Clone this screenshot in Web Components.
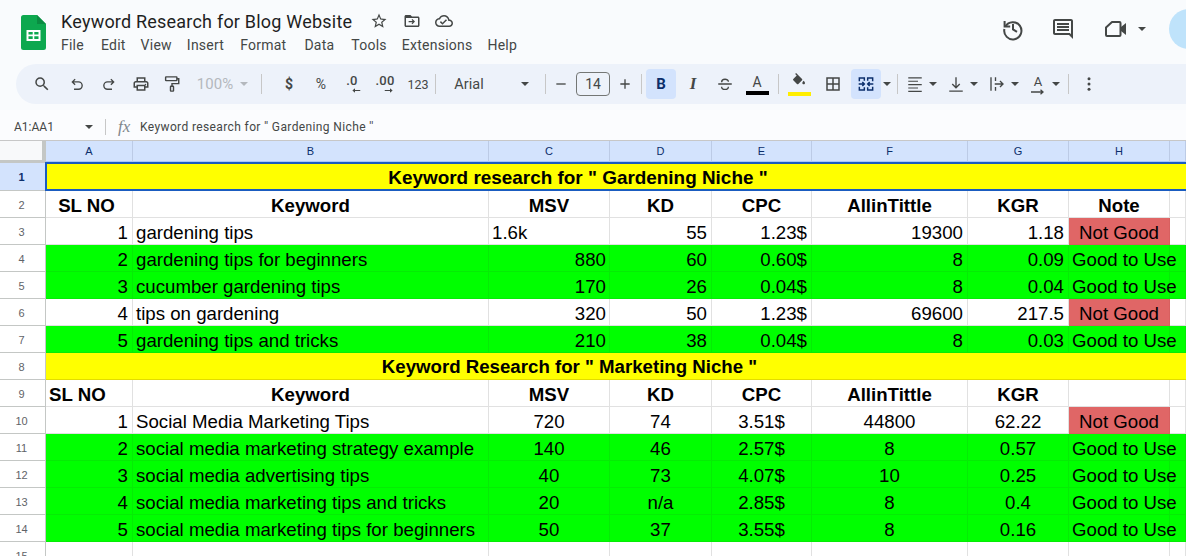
<!DOCTYPE html>
<html>
<head>
<meta charset="utf-8">
<title>Keyword Research for Blog Website</title>
<style>
  html, body { margin: 0; height: 100%; overflow: hidden; background: #f9fbfd; }
  gs-app { width: 1186px; height: 556px; }
</style>
</head>
<body>
<gs-app></gs-app>
<script>
const ICONS = {
  star: '<path d="M22 9.24l-7.19-.62L12 2 9.19 8.63 2 9.24l5.46 4.73L5.82 21 12 17.27 18.18 21l-1.63-7.03L22 9.24zM12 15.4l-3.76 2.27 1-4.28-3.32-2.88 4.38-.38L12 6.1l1.71 4.04 4.38.38-3.32 2.88 1 4.28L12 15.4z"/>',
  folder: '<path d="M20 6h-8l-2-2H4c-1.1 0-2 .9-2 2v12c0 1.1.9 2 2 2h16c1.1 0 2-.9 2-2V8c0-1.1-.9-2-2-2zm0 12H4V8h16v10z"/><path d="M12.5 9.2l-1.1 1.1 1.5 1.6H7.5v1.6h5.4l-1.5 1.6 1.1 1.1 3.5-3.5z"/>',
  cloud: '<path d="M19.35 10.04C18.67 6.59 15.64 4 12 4 9.11 4 6.6 5.64 5.35 8.04 2.34 8.36 0 10.91 0 14c0 3.31 2.69 6 6 6h13c2.76 0 5-2.24 5-5 0-2.64-2.05-4.78-4.65-4.96zM19 18H6c-2.21 0-4-1.79-4-4 0-2.05 1.53-3.76 3.56-3.97l1.07-.11.5-.95C8.08 7.14 9.94 6 12 6c2.62 0 4.88 1.86 5.39 4.43l.3 1.5 1.53.11c1.56.1 2.78 1.41 2.78 2.96 0 1.65-1.35 3-3 3zm-9-3.82l-2.09-2.09L6.5 13.5 10 17l6.01-6.01-1.41-1.41z"/>',
  history: '<g fill="none" stroke="currentColor" stroke-width="2"><path d="M3.6 4v5.6h5.6"/><path d="M4.4 9.4A8.6 8.6 0 1 1 3.4 12"/><path d="M12 7v5.4l4 2.4"/></g>',
  comment: '<path d="M21.99 4c0-1.1-.89-2-1.99-2H4c-1.1 0-2 .9-2 2v12c0 1.1.9 2 2 2h14l4 4-.01-18zM20 4v13.17L18.83 16H4V4h16zM6 12h12v2H6zm0-3h12v2H6zm0-3h12v2H6z"/>',
  video: '<path fill="none" stroke="currentColor" stroke-width="2" stroke-linejoin="round" d="M8 5h7.5a1 1 0 0 1 1 1v12a1 1 0 0 1-1 1H3a1 1 0 0 1-1-1v-7.5z"/><path d="M17 10l5-4v12l-5-4z"/>',
  search: '<path d="M15.5 14h-.79l-.28-.27A6.471 6.471 0 0 0 16 9.5 6.5 6.5 0 1 0 9.5 16c1.61 0 3.09-.59 4.23-1.57l.27.28v.79l5 4.99L20.49 19l-4.99-5zm-6 0C7.01 14 5 11.99 5 9.5S7.01 5 9.5 5 14 7.01 14 9.5 11.99 14 9.5 14z"/>',
  undo: '<path fill="none" stroke="currentColor" stroke-width="1.8" d="M9.5 5.5 5.800 9.200l3.700 3.700M6 9.200h8a4.900 4.900 0 0 1 0 9.800H8"/>',
  redo: '<path fill="none" stroke="currentColor" stroke-width="1.8" d="M14.500 5.500l3.700 3.700-3.700 3.700M18 9.200h-8a4.900 4.900 0 0 0 0 9.800h6"/>',
  print: '<path d="M19 8h-1V3H6v5H5c-1.66 0-3 1.34-3 3v6h4v4h12v-4h4v-6c0-1.66-1.34-3-3-3zM8 5h8v3H8V5zm8 12v2H8v-4h8v2zm2-2v-2H6v2H4v-4c0-.55.45-1 1-1h14c.55 0 1 .45 1 1v4h-2z"/><circle cx="18" cy="12.5" r="1"/>',
  paint: '<g fill="none" stroke="currentColor" stroke-width="1.9"><rect x="3.5" y="2.5" width="15" height="5" rx=".6"/><path d="M18.5 5h2.5v6.5h-9V15"/><rect x="10" y="15" width="4" height="6.5" rx=".6"/></g>',
  minus: '<path d="M5 11h14v2H5z"/>',
  plus: '<path d="M11 5h2v6h6v2h-6v6h-2v-6H5v-2h6z"/>',
  strike: '<path fill="none" stroke="currentColor" stroke-width="1.8" d="M3 12h18M7.5 9.5C7.5 4.5 16.5 4.5 16.5 9M7.5 15.5c0 5 9 5 9 0"/>',
  fill: '<path d="M16.56 8.94L7.62 0 6.21 1.41l2.38 2.38-5.15 5.15c-.59.59-.59 1.54 0 2.12l5.5 5.5c.29.29.68.44 1.06.44s.77-.15 1.06-.44l5.5-5.5c.59-.58.59-1.53 0-2.12zM19 11.5s-2 2.17-2 3.5c0 1.1.9 2 2 2s2-.9 2-2c0-1.33-2-3.5-2-3.5z"/>',
  borders: '<path d="M3 3v18h18V3H3zm8 16H5v-6h6v6zm0-8H5V5h6v6zm8 8h-6v-6h6v6zm0-8h-6V5h6v6z"/>',
  merge: '<path fill="none" stroke="currentColor" stroke-width="2.2" d="M2 8V3h7.500v4M22 8V3h-7.500v4M2 16v5h7.500v-4M22 16v5h-7.500v-4M1 12h8M6.500 9 9.500 12l-3 3M23 12h-8M17.500 9 14.500 12l3 3"/>',
  align: '<path d="M3 3h18v1.600H3zM3 7.500h13v1.600H3zM3 12h18v1.600H3zM3 16.500h13v1.600H3zM3 21h18v1.600H3z"/>',
  valign: '<path fill="none" stroke="currentColor" stroke-width="1.800" d="M12 3v14M7 12l5 5 5-5M3 21.500h18"/>',
  wrap: '<path fill="none" stroke="currentColor" stroke-width="1.800" d="M4 3v18M10 3v5M10 16v5M9 12h11M16 8l4 4-4 4"/>',
  more: '<circle cx="12" cy="5" r="2"/><circle cx="12" cy="12" r="2"/><circle cx="12" cy="19" r="2"/>',
  arrowl: '<path d="M22 10.500H8V6L1 12l7 6v-4.500h14z"/>',
  arrowr: '<path d="M2 10.500h14V6l7 6-7 6v-4.500H2z"/>'
};

class GsIcon extends HTMLElement {
  connectedCallback() {
    if (this.shadowRoot) return;
    const size = this.getAttribute("size") || 18;
    this.attachShadow({ mode: "open" });
    this.shadowRoot.innerHTML = `
      <style>
        :host { display: inline-flex; width: ${size}px; height: ${size}px; color: var(--icon, #444746); flex: none; }
        svg { width: 100%; height: 100%; fill: currentColor; display: block; }
      </style>
      <svg viewBox="0 0 24 24">${ICONS[this.getAttribute("name")] || ""}</svg>`;
  }
}

class GsCaret extends HTMLElement {
  constructor() {
    super();
    this.attachShadow({ mode: "open" });
    this.shadowRoot.innerHTML = `
      <style>
        :host { display: inline-block; width: 0; height: 0; flex: none; margin-right: 1px;
          border-left: 4px solid transparent; border-right: 4px solid transparent;
          border-top: 4px solid var(--icon, #444746); }
      </style>`;
  }
}

class GsTitleBar extends HTMLElement {
  constructor() {
    super();
    this.attachShadow({ mode: "open" });
    const menus = ["File", "Edit", "View", "Insert", "Format", "Data", "Tools", "Extensions", "Help"];
    this.shadowRoot.innerHTML = `
      <style>
        :host { display: flex; height: 64px; flex: none; box-sizing: border-box; padding-left: 21px; overflow: hidden;
          font-family: Roboto, "Liberation Sans", sans-serif; color: #1f1f1f; }
        .logo { width: 25px; height: 35px; margin-top: 15px; flex: none; }
        .doc { margin-left: 15px; padding-top: 10px; width: 480px; flex: none; }
        .name { display: flex; align-items: center; height: 22px; margin-bottom: 2px; font-size: 18px; letter-spacing: .21px; white-space: nowrap; }
        .name span { width: 291px; flex: none; }
        .name gs-icon { margin-right: 14.500px; --icon: #444746; }
        .name gs-icon:first-of-type { margin-left: 18px; }
        .menu { display: flex; gap: 0; margin-top: 1px; font-size: 14px; letter-spacing: .24px; color: #444746; white-space: nowrap; height: 22px; align-items: center; }
        .actions { margin-left: auto; display: flex; align-items: center; height: 58px; }
        .actions gs-icon { --icon: #444746; }
        .avatar { width: 40px; height: 40px; border-radius: 50%; background: #bfe3fb; margin-left: 22px; margin-right: -23px; flex: none; }
      </style>
      <svg class="logo" viewBox="0 0 25 35">
        <path fill="#0da84f" d="M2.500 0H16l9 9v23.500a2.500 2.500 0 0 1-2.500 2.500h-20A2.500 2.500 0 0 1 0 32.500v-30A2.500 2.500 0 0 1 2.500 0z"/>
        <path fill="#0a8c42" d="M16 0l9 9h-9z"/>
        <path fill="#fff" d="M5.500 15h14v11h-14z"/>
        <path fill="#0da84f" d="M7.500 17h4.200v2.500H7.500zM13.300 17h4.200v2.500h-4.200zM7.500 21.300h4.200v2.700H7.500zM13.300 21.300h4.200v2.700h-4.200z"/>
      </svg>
      <div class="doc">
        <div class="name"><span>Keyword Research for Blog Website</span>
          <gs-icon name="star" size="18"></gs-icon><gs-icon name="folder" size="18"></gs-icon><gs-icon name="cloud" size="18"></gs-icon>
        </div>
        <div class="menu">${menus.map((m, i) => `<span style="margin-right:${[17,15,15,16,18,17,15,15,0][i]}px">${m}</span>`).join("")}</div>
      </div>
      <div class="actions">
        <gs-icon name="history" size="24"></gs-icon>
        <gs-icon name="comment" size="24" style="margin-left:26px"></gs-icon>
        <gs-icon name="video" size="24" style="margin-left:29px"></gs-icon>
        <gs-caret style="margin-left:10px"></gs-caret>
        <div class="avatar"></div>
      </div>`;
  }
}

// [kind, centre x, width, payload]
const TOOLS = [
  ["icon", 42, 18, "search"], ["icon", 77, 18, "undo"], ["icon", 109, 18, "redo"], ["icon", 141, 18, "print"],
  ["icon", 172, 18, "paint"], ["text dim", 215, 40, "100%"], ["caret dim", 244, 10], ["sep", 261, 1],
  ["text b", 289, 14, "$"], ["text", 321, 14, "%"], ["dec", 352, 22, ".0|arrowl"], ["dec", 385, 24, ".00|arrowr"],
  ["text small", 418, 26, "123"], ["sep", 435, 1], ["text font", 469, 32, "Arial"], ["caret", 525, 10], ["sep", 545, 1],
  ["icon", 561, 16, "minus"], ["size", 593, 34, "14"], ["icon", 625, 16, "plus"], ["sep", 641, 1],
  ["on b", 661, 30, "B"], ["text i", 693, 20, "I"], ["icon", 725, 18, "strike"], ["color", 757, 24, "A"], ["sep", 778, 1],
  ["fill", 799, 24], ["icon", 833, 18, "borders"], ["on", 866, 30, "merge"], ["caret", 887, 10], ["sep", 897, 1],
  ["icon", 915, 18, "align"], ["caret", 933, 10], ["icon", 956, 18, "valign"], ["caret", 974, 10],
  ["icon", 997, 18, "wrap"], ["caret", 1015, 10], ["rotate", 1038, 20, "A"], ["caret", 1056, 10], ["sep", 1068, 1],
  ["icon", 1089, 18, "more"]
];

class GsToolbar extends HTMLElement {
  constructor() {
    super();
    this.attachShadow({ mode: "open" });
    let right = 16;
    const html = TOOLS.map(([kind, x, w, p]) => {
      const left = x - w / 2;
      const margin = left - right;
      const style = `margin-left:${margin}px;width:${w}px`;
      right = left + w;
      const k = kind.split(" ")[0];
      if (k === "icon") return `<gs-icon name="${p}" style="${style}"></gs-icon>`;
      if (k === "caret") return `<gs-caret class="${kind}" style="margin-left:${margin + 1}px"></gs-caret>`;
      if (k === "sep") return `<i class="sep" style="${style}"></i>`;
      if (k === "text") return `<span class="${kind}" style="${style}">${p}</span>`;
      if (k === "dec") {
        const [t, a] = p.split("|");
        return `<span class="dec" style="${style}"><b>${t}</b><gs-icon name="${a}" size="9" class="${a}"></gs-icon></span>`;
      }
      if (k === "size") return `<span class="size" style="${style}">${p}</span>`;
      if (k === "on") return `<span class="on" style="${style}">${p === "B" ? "B" : `<gs-icon name="merge" size="16"></gs-icon>`}</span>`;
      if (k === "color") return `<span class="color" style="${style}"><span>A</span><i></i></span>`;
      if (k === "fill") return `<span class="color fill" style="${style}"><gs-icon name="fill" size="16"></gs-icon><i></i></span>`;
      if (k === "rotate") return `<span class="rotate" style="${style}"><span>A</span><svg viewBox="0 0 14 6"><path d="M0 3h12M9.500 .8 12 3 9.500 5.200" fill="none" stroke="#444746" stroke-width="1.300"/></svg></span>`;
      return "";
    }).join("");
    this.shadowRoot.innerHTML = `
      <style>
        :host { display: flex; align-items: center; height: 40px; flex: none; width: 1200px; margin-left: 16px;
          box-sizing: border-box; background: #edf2fa; border-radius: 20px 0 0 20px;
          font-family: Roboto, "Liberation Sans", sans-serif; color: #444746; font-size: 14px; white-space: nowrap; margin-bottom: 6px; }
        .sep { height: 20px; background: #c7c7c7; display: block; flex: none; }
        span { display: inline-flex; align-items: center; justify-content: center; box-sizing: border-box; flex: none; }
        .dim { color: #b4b8bd; --icon: #b4b8bd; font-size: 15px; }
        .b { font-weight: 700; font-size: 14px; }
        .small { font-size: 12.500px; }
        .font { font-size: 14.500px; }
        .dec { flex-direction: column; height: 24px; }
        .dec b { font-size: 13px; line-height: 14px; font-weight: 500; letter-spacing: .2px; }
        .dec gs-icon { margin-top: -2px; }
        .arrowl { margin-left: 8px; }
        .arrowr { margin-left: 6px; }
        .size { height: 24px; border: 1px solid #747775; border-radius: 4px; color: #444746; }
        .on { height: 30px; background: #d3e3fd; border-radius: 4px; color: #0b2e6b; --icon: #0b2e6b; font-weight: 700; font-size: 15px; }
        .i { font-family: "Liberation Serif", serif; font-style: italic; font-weight: 700; font-size: 17px; }
        .color { flex-direction: column; height: 26px; font-size: 14px; }
        .color span { height: 18px; }
        .color i { display: block; width: 23px; height: 4px; background: #000; }
        .fill gs-icon { margin-bottom: 3px; }
        .fill i { background: #ffee00; }
        .rotate { flex-direction: column; height: 22px; font-size: 13px; }
        .rotate span { height: 15px; }
        .rotate svg { width: 14px; height: 6px; }
      </style>${html}`;
  }
}

class GsFormulaBar extends HTMLElement {
  constructor() {
    super();
    this.attachShadow({ mode: "open" });
    this.shadowRoot.innerHTML = `
      <style>
        :host { display: flex; align-items: center; height: 31px; flex: none; box-sizing: border-box;
          padding: 3px 0 0 14px; background: #fbfcfe; border-bottom: 1px solid #c7c7c7;
          font-family: Roboto, "Liberation Sans", sans-serif; font-size: 12px; color: #444746; white-space: nowrap; }
        .ref { width: 71px; flex: none; }
        .sep { width: 1px; height: 16px; background: #c7c7c7; margin-left: 11px; flex: none; }
        .fx { font-family: "Liberation Serif", serif; font-style: italic; font-size: 17px; color: #80868b; margin-left: 12px; width: 22px; flex: none; }
        .text { letter-spacing: .38px; }
      </style>
      <span class="ref">A1:AA1</span><gs-caret></gs-caret><span class="sep"></span>
      <span class="fx">fx</span><span class="text"><slot></slot></span>`;
  }
}

const RIGHT = "r", CENTER = "c", LEFT = "l";
const ROWS = [
  { title: `Keyword research for " Gardening Niche "`, sel: 1, pad: 80 },
  { head: ["SL NO", "Keyword", "MSV", "KD", "CPC", "AllinTittle", "KGR", "Note"], pad: 5 },
  { v: ["1", "gardening tips", "1.6k", "55", "1.23$", "19300", "1.18", "Not Good"], c: RIGHT },
  { v: ["2", "gardening tips for beginners", "880", "60", "0.60$", "8", "0.09", "Good to Use"], c: RIGHT, g: 1 },
  { v: ["3", "cucumber gardening tips", "170", "26", "0.04$", "8", "0.04", "Good to Use"], c: RIGHT, g: 1 },
  { v: ["4", "tips on gardening", "320", "50", "1.23$", "69600", "217.5", "Not Good"], c: RIGHT },
  { v: ["5", "gardening tips and tricks", "210", "38", "0.04$", "8", "0.03", "Good to Use"], c: RIGHT, g: 1 },
  { title: `Keyword Research for " Marketing Niche "`, pad: 96 },
  { head: ["SL NO", "Keyword", "MSV", "KD", "CPC", "AllinTittle", "KGR", ""], leftA: 1 },
  { v: ["1", "Social Media Marketing Tips", "720", "74", "3.51$", "44800", "62.22", "Not Good"], c: CENTER },
  { v: ["2", "social media marketing strategy example", "140", "46", "2.57$", "8", "0.57", "Good to Use"], c: CENTER, g: 1 },
  { v: ["3", "social media advertising tips", "40", "73", "4.07$", "10", "0.25", "Good to Use"], c: CENTER, g: 1 },
  { v: ["4", "social media marketing tips and tricks", "20", "n/a", "2.85$", "8", "0.4", "Good to Use"], c: CENTER, g: 1 },
  { v: ["5", "social media marketing tips for beginners", "50", "37", "3.55$", "8", "0.16", "Good to Use"], c: CENTER, g: 1 }
];

class GsSheet extends HTMLElement {
  constructor() {
    super();
    this.attachShadow({ mode: "open" });
    const cell = (text, cls, style = "") => `<div class="cell ${cls}" style="${style}">${text}</div>`;
    let html = `<div class="corner"></div>`;
    "ABCDEFGHI".split("").forEach(l => { html += `<div class="col">${l === "I" ? "" : l}</div>`; });
    ROWS.forEach((row, i) => {
      html += `<div class="rownum ${row.sel ? "sel" : ""}">${i + 1}</div>`;
      if (row.title) {
        html += `<div class="cell title ${row.sel ? "selected" : ""}" style="padding-right:${row.pad}px">${row.title}</div>`;
      } else if (row.head) {
        row.head.forEach((t, j) => {
          html += cell(t, `bold ${j === 0 && row.leftA ? "l" : "c"}`, j === 0 && row.pad ? `padding-right:${row.pad}px` : "");
        });
        html += cell("", "");
      } else {
        row.v.forEach((t, j) => {
          let cls = row.g ? "green " : "";
          if (j === 0) cls += "r";
          else if (j === 1) cls += "l";
          else if (j === 7) cls += t === "Not Good" ? "c red" : "l over";
          else if (t === "1.6k") cls += "l";
          else cls += row.c;
          html += cell(t, cls, j === 2 && row.c === RIGHT ? "padding-right:3px" : "");
        });
        html += cell("", row.g ? "green" : "");
      }
    });
    html += `<div class="rownum">15</div>` + `<div class="cell"></div>`.repeat(9);
    this.shadowRoot.innerHTML = `
      <style>
        :host { display: grid; flex: 1; min-height: 0; overflow: hidden; background: #fff;
          grid-template-columns: 46px 87px 356px 121px 102px 100px 156px 101px 101px 16px;
          grid-template-rows: 22px 28px repeat(14, 27px);
          font-family: "Liberation Sans", Arial, sans-serif; font-size: 18.670px; color: #000; }
        .corner { background: #f8f9fa; box-sizing: border-box; border-right: 4px solid #c4c7c5; border-bottom: 3px solid #c4c7c5; }
        .col { background: #d3e3fd; box-sizing: border-box; border-right: 1px solid #bccbe6; border-bottom: 2px solid #a8c7fa;
          display: flex; align-items: center; justify-content: center;
          font-size: 11px; color: #0b2e6b; }
        .rownum { box-sizing: border-box; background: #fff; border-right: 1px solid #c4c7c5; border-bottom: 1px solid #c4c7c5;
          display: flex; align-items: center; justify-content: center; padding-right: 2px; padding-top: 1px;
          font-size: 11px; color: #5f6368; }
        .rownum.sel { background: #d3e3fd; color: #0b2e6b; font-weight: 700; }
        .cell { box-sizing: border-box; border-right: 1px solid #e1e1e1; border-bottom: 1px solid #e1e1e1;
          padding: 4px 4px 0 3px; white-space: nowrap; display: flex; align-items: center; line-height: 22px; min-width: 0; }
        .r { justify-content: flex-end; }
        .c { justify-content: center; padding-left: 0; padding-right: 0; }
        .l { justify-content: flex-start; }
        .bold { font-weight: 700; }
        .title { grid-column: 2 / -1; background: #ffff00; font-weight: 700; justify-content: center; border-right: 0; border-bottom-color: #e2dc00; padding-top: 2px; }
        .selected { border: 2px solid #1a5cc0; border-right: 0; margin-left: -1px; margin-top: -1px; font-size: 18.920px; }
        .green { background: #00ff00; border-color: #05ec05; }
        .red { background: #e06666; border-color: #d86060; }
        .over { z-index: 1; }
      </style>${html}`;
  }
}

class GsApp extends HTMLElement {
  constructor() {
    super();
    this.attachShadow({ mode: "open" });
    this.shadowRoot.innerHTML = `
      <style>
        :host { display: flex; flex-direction: column; overflow: hidden; background: #f9fbfd; }
      </style>
      <gs-title-bar></gs-title-bar>
      <gs-toolbar></gs-toolbar>
      <gs-formula-bar>Keyword research for '' Gardening Niche ''</gs-formula-bar>
      <gs-sheet></gs-sheet>`;
  }
}

customElements.define("gs-icon", GsIcon);
customElements.define("gs-caret", GsCaret);
customElements.define("gs-title-bar", GsTitleBar);
customElements.define("gs-toolbar", GsToolbar);
customElements.define("gs-formula-bar", GsFormulaBar);
customElements.define("gs-sheet", GsSheet);
customElements.define("gs-app", GsApp);
</script>
</body>
</html>
